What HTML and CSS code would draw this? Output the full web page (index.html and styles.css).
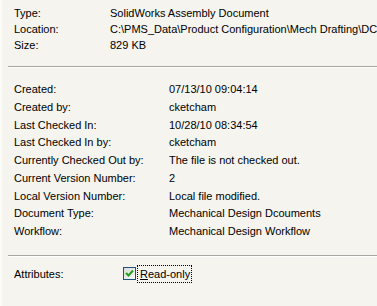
FILE: index.html
```html
<!DOCTYPE html>
<html>
<head>
<meta charset="utf-8">
<link rel="stylesheet" href="styles.css">
</head>
<body>
<div class="panel">
  <div class="grid grid-top">
    <div class="label">Type:</div><div class="value">SolidWorks Assembly Document</div>
    <div class="label">Location:</div><div class="value">C:\PMS_Data\Product Configuration\Mech Drafting\DCS\Assemblies</div>
    <div class="label">Size:</div><div class="value">829 KB</div>
  </div>
  <div class="divider"></div>
  <div class="grid grid-mid">
    <div class="label">Created:</div><div class="value">07/13/10 09:04:14</div>
    <div class="label">Created by:</div><div class="value">cketcham</div>
    <div class="label">Last Checked In:</div><div class="value">10/28/10 08:34:54</div>
    <div class="label">Last Checked In by:</div><div class="value">cketcham</div>
    <div class="label">Currently Checked Out by:</div><div class="value">The file is not checked out.</div>
    <div class="label">Current Version Number:</div><div class="value">2</div>
    <div class="label">Local Version Number:</div><div class="value">Local file modified.</div>
    <div class="label">Document Type:</div><div class="value">Mechanical Design Dcouments</div>
    <div class="label">Workflow:</div><div class="value">Mechanical Design Workflow</div>
  </div>
  <div class="divider divider-bottom"></div>
  <div class="attr-row">
    <div class="label attr-label">Attributes:</div>
    <div class="check">
      <span class="box">
        <svg width="9" height="9" viewBox="0 0 9 9"><path d="M1 4 L3.5 6.5 L8 1.5" fill="none" stroke="#21a121" stroke-width="2"/></svg>
      </span>
      <span class="check-text"><u>R</u>ead-only</span>
    </div>
  </div>
</div>
</body>
</html>
```
FILE: styles.css
```css
html, body {
  margin: 0;
  padding: 0;
}
body {
  width: 377px;
  height: 306px;
  overflow: hidden;
  background: #f5f4ef;
  font-family: "Liberation Sans", Arial, sans-serif;
  font-size: 11px;
  color: #000;
  border-left: 2px solid #fbfbf8;
  box-sizing: border-box;
}
.panel {
  padding-top: 4.5px;
}
.grid {
  display: grid;
  padding-left: 12px;
}
.grid-top {
  grid-template-columns: 96px 1fr;
  grid-auto-rows: 16.25px;
  line-height: 16.25px;
}
.grid-mid {
  grid-template-columns: 155px 1fr;
  grid-auto-rows: 17.75px;
  line-height: 17.75px;
  margin-top: 13px;
}
.value, .label {
  white-space: nowrap;
  overflow: hidden;
}
.divider {
  margin-top: 12.75px;
  margin-left: 6px;
  height: 1px;
  background: #a7a6a0;
  border-bottom: 1px solid #ffffff;
}
.divider-bottom {
  margin-top: 14px;
}
.attr-row {
  display: flex;
  align-items: center;
  padding-left: 12px;
  margin-top: 8px;
  height: 18px;
}
.attr-label {
  width: 109px;
}
.check {
  display: flex;
  align-items: center;
}
.box {
  width: 11px;
  height: 11px;
  border: 1px solid #1c5180;
  background: linear-gradient(135deg, #dcdcd7, #f8f8f5);
  display: flex;
  align-items: center;
  justify-content: center;
}
.check-text {
  margin-left: 1px;
  padding: 1px 1px 1px 2px;
  border: 1px dotted #000;
  line-height: 14px;
}
```
